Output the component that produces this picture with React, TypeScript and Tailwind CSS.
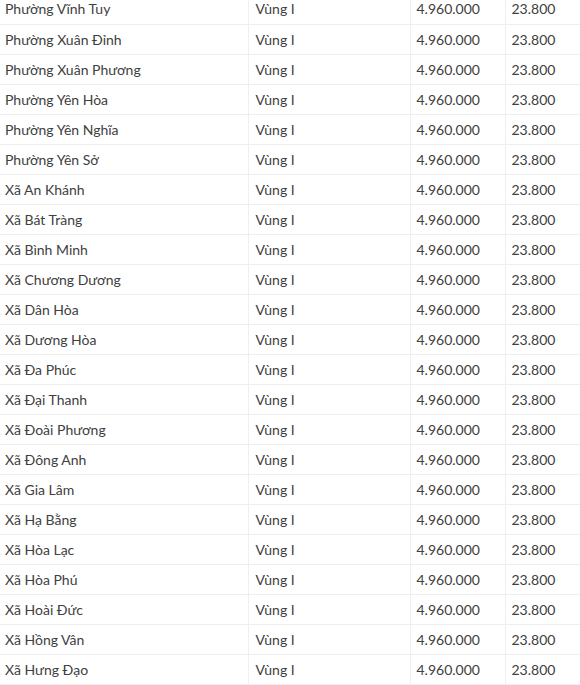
import React from "react";

const names = [
  "Phường Vĩnh Tuy",
  "Phường Xuân Đỉnh",
  "Phường Xuân Phương",
  "Phường Yên Hòa",
  "Phường Yên Nghĩa",
  "Phường Yên Sở",
  "Xã An Khánh",
  "Xã Bát Tràng",
  "Xã Bình Minh",
  "Xã Chương Dương",
  "Xã Dân Hòa",
  "Xã Dương Hòa",
  "Xã Đa Phúc",
  "Xã Đại Thanh",
  "Xã Đoài Phương",
  "Xã Đông Anh",
  "Xã Gia Lâm",
  "Xã Hạ Bằng",
  "Xã Hòa Lạc",
  "Xã Hòa Phú",
  "Xã Hoài Đức",
  "Xã Hồng Vân",
  "Xã Hưng Đạo",
];

export default function App() {
  return (
    <div className="w-[580px] h-[685px] overflow-hidden bg-white">
      <table
        className="-mt-[6px] w-[580px] border-collapse table-fixed text-[14px] text-[#404040]"
        style={{ fontFamily: "Lato, 'Noto Sans', sans-serif" }}
      >
        <colgroup>
          <col className="w-[248px]" />
          <col className="w-[162px]" />
          <col className="w-[95px]" />
          <col className="w-[75px]" />
        </colgroup>
        <tbody>
          {names.map((n) => (
            <tr key={n} className="h-[30px]">
              <td className="border-b border-r border-[#efefef] pl-[5px] align-middle">{n}</td>
              <td className="border-b border-r border-[#efefef] pl-[7px] align-middle">Vùng I</td>
              <td className="border-b border-r border-[#efefef] pl-[6px] align-middle">4.960.000</td>
              <td className="border-b border-[#efefef] pl-[6px] align-middle">23.800</td>
            </tr>
          ))}
        </tbody>
      </table>
    </div>
  );
}
